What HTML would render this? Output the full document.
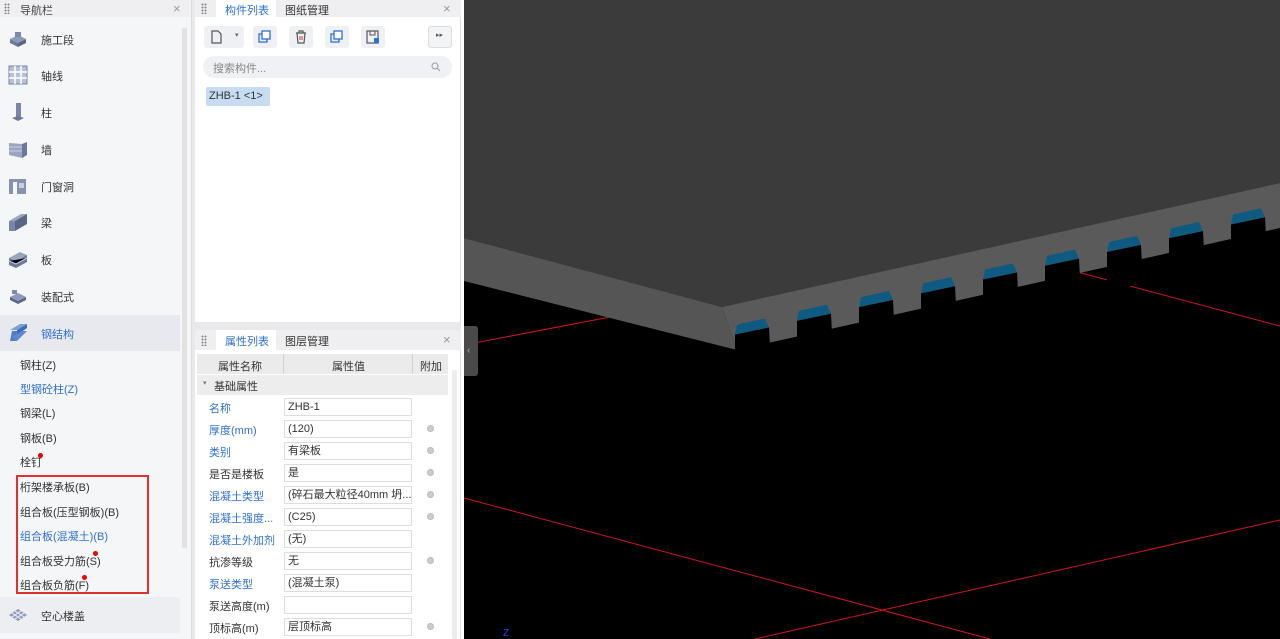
<!DOCTYPE html>
<html><head><meta charset="utf-8"><style>
*{margin:0;padding:0;box-sizing:border-box}
body{width:1280px;height:639px;overflow:hidden;background:#fff;font-family:"Liberation Sans","Noto Sans CJK SC",sans-serif;font-size:11px;color:#333;position:relative}
.abs{position:absolute}
.hdr{background:#efeff1;height:17px}
.grip{position:absolute;width:6px;height:11px;top:3px;background-image:radial-gradient(circle,#888 0.9px,transparent 1.1px);background-size:3px 3px}
.x{position:absolute;top:1px;color:#999;font-size:13px}
.nav-item{position:absolute;left:0;width:180px;height:36px}
.nav-item .ic{position:absolute;left:8px;top:8px;width:20px;height:20px}
.nav-item span{position:absolute;left:41px;top:11px;font-size:11px}
.sub{position:absolute;left:20px;font-size:11px}
.dot{position:absolute;width:5px;height:5px;border-radius:50%;background:#e00}
.tb{position:absolute;top:26px;width:24px;height:22px;background:#eef0f4;border-radius:3px}
.row{position:absolute;left:197px;width:250px;height:22px}
.row .n{position:absolute;left:12px;top:4px}
.row .v{position:absolute;left:87px;top:2px;width:128px;height:18px;border:1px solid #ddd;background:#fff;padding:1px 3px;white-space:nowrap;overflow:hidden;line-height:14px}
.row .c{position:absolute;left:230px;top:7px;width:7px;height:7px;border-radius:50%;background:#ccc;border:1px solid #bbb}
.b{color:#2f6fd6}
</style></head><body>
<div class="abs" style="left:0;top:0;width:191px;height:639px;background:#f5f6f8"></div>
<div class="abs hdr" style="left:0;top:0;width:191px"></div>
<div class="grip" style="left:4px"></div>
<div class="abs" style="left:20px;top:2px;font-size:11px;color:#444">导航栏</div>
<div class="x" style="left:173px">×</div>
<div class="abs" style="left:182px;top:28px;width:5px;height:520px;background:#e2e2e2;border-radius:2px"></div>
<div class="abs" style="left:191px;top:0;width:4px;height:639px;background:#e9e9eb;border-left:1px solid #ddd"></div>

<div class="nav-item" style="top:21px"><svg class="ic" viewBox="0 0 20 20"><path d="M2 10l8-4 8 4-8 4z" fill="#8f9ab8"/><path d="M2 10v4l8 4v-4z" fill="#6b789a"/><path d="M18 10v4l-8 4v-4z" fill="#5a6686"/><rect x="7" y="3" width="6" height="5" fill="#7d89a8"/></svg><span>施工段</span></div>
<div class="nav-item" style="top:57px"><svg class="ic" viewBox="0 0 20 20"><rect x="1" y="1" width="18" height="18" fill="#b8c1d6" stroke="#7884a3"/><path d="M7 1v18M13 1v18M1 7h18M1 13h18" stroke="#fff" stroke-width="1.5"/></svg><span>轴线</span></div>
<div class="nav-item" style="top:94px"><svg class="ic" viewBox="0 0 20 20"><rect x="8" y="1" width="5" height="14" fill="#7a86a6"/><path d="M4 16l6-2 6 2-6 3z" fill="#6b789a"/></svg><span>柱</span></div>
<div class="nav-item" style="top:131px"><svg class="ic" viewBox="0 0 20 20"><path d="M1 4l13 1v14L1 16z" fill="#9aa5c0"/><path d="M14 5l5-2v13l-5 3z" fill="#6b789a"/><path d="M1 8h13M1 12h13" stroke="#c8cfe0"/></svg><span>墙</span></div>
<div class="nav-item" style="top:168px"><svg class="ic" viewBox="0 0 20 20"><path d="M1 3h17v15H1z" fill="#8792b0"/><rect x="5" y="6" width="4" height="12" fill="#f5f6f8"/><rect x="11" y="7" width="5" height="5" fill="#c8cfe0"/></svg><span>门窗洞</span></div>
<div class="nav-item" style="top:204px"><svg class="ic" viewBox="0 0 20 20"><path d="M1 9l12-7h6L7 9z" fill="#9aa5c0"/><path d="M1 9h6v10H1z" fill="#7a86a6"/><path d="M7 9l12-7v10L7 19z" fill="#5a6686"/></svg><span>梁</span></div>
<div class="nav-item" style="top:241px"><svg class="ic" viewBox="0 0 20 20"><path d="M1 9l11-6 7 3-11 6z" fill="#9aa5c0"/><path d="M1 9v7l7 3v-7zM8 12l11-6v7L8 19z" fill="#6b789a"/><path d="M1 12l7 3 11-6" stroke="#c8cfe0"/></svg><span>板</span></div>
<div class="nav-item" style="top:278px"><svg class="ic" viewBox="0 0 20 20"><path d="M2 11l8-4 8 4-8 4z" fill="#8f9ab8"/><path d="M2 11v3l8 4v-3zM18 11v3l-8 4v-3z" fill="#5a6686"/><rect x="4" y="4" width="5" height="4" fill="#7d89a8"/></svg><span>装配式</span></div>
<div class="nav-item" style="top:315px;background:#e7e9ee"><svg class="ic" viewBox="0 0 20 20"><path d="M2 7l10-6h7L9 7z" fill="#7aa0d8"/><path d="M4 8h5v10H2z" fill="#4f7fc8"/><path d="M9 7l10-6v4L9 12z" fill="#3a6cb8"/><path d="M4 14l10-6h5L9 18z" fill="#5b8ad0"/></svg><span class="b">钢结构</span></div>

<div class="sub" style="top:357px">钢柱(Z)</div>
<div class="sub b" style="top:381px">型钢砼柱(Z)</div>
<div class="sub" style="top:405px">钢梁(L)</div>
<div class="sub" style="top:430px">钢板(B)</div>
<div class="sub" style="top:454px">栓钉</div><div class="dot" style="left:38px;top:453px"></div>
<div class="abs" style="left:16px;top:475px;width:133px;height:119px;border:2px solid #e03030"></div>
<div class="sub" style="top:479px">桁架楼承板(B)</div>
<div class="sub" style="top:504px">组合板(压型钢板)(B)</div>
<div class="sub b" style="top:528px">组合板(混凝土)(B)</div>
<div class="sub" style="top:553px">组合板受力筋(S)</div><div class="dot" style="left:93px;top:551px"></div>
<div class="sub" style="top:577px">组合板负筋(F)</div><div class="dot" style="left:82px;top:575px"></div>
<div class="nav-item" style="top:597px;background:#eceef2"><svg class="ic" viewBox="0 0 20 20"><path d="M1 10l9-6 9 6-9 6z" fill="#8f9ab8"/><path d="M4 8l9 6M7 6l9 6M13 6l-9 6M16 8l-9 6" stroke="#dfe3ec" stroke-width="1.2"/></svg><span>空心楼盖</span></div>

<div class="abs" style="left:195px;top:0;width:266px;height:322px;background:#fff;border-right:1px solid #ddd"></div>
<div class="abs hdr" style="left:195px;top:0;width:266px"></div>
<div class="grip" style="left:201px"></div>
<div class="abs" style="left:216px;top:0;width:60px;height:17px;background:#fff"></div>
<div class="abs b" style="left:225px;top:2px">构件列表</div>
<div class="abs" style="left:285px;top:2px">图纸管理</div>
<div class="x" style="left:443px">×</div>
<div class="tb" style="left:204px;width:40px"><svg class="abs" style="left:5px;top:4px" width="14" height="14" viewBox="0 0 14 14"><path d="M3 1h6l3 3v9H3z" fill="none" stroke="#555" stroke-width="1.2"/></svg><span class="abs" style="left:31px;top:5px;font-size:7px;color:#666">▾</span></div>
<div class="tb" style="left:253px"><svg class="abs" style="left:5px;top:4px" width="14" height="14" viewBox="0 0 14 14"><rect x="1" y="4" width="8" height="8" fill="none" stroke="#2f6fd6" stroke-width="1.3"/><rect x="4" y="1" width="8" height="8" fill="#fff" stroke="#2f6fd6" stroke-width="1.3"/></svg></div>
<div class="tb" style="left:289px"><svg class="abs" style="left:5px;top:4px" width="14" height="14" viewBox="0 0 14 14"><path d="M2 3h10M5 3V1h4v2M3 3l1 10h6l1-10" fill="none" stroke="#555" stroke-width="1.2"/><path d="M6 6v4M8 6v4" stroke="#d33"/></svg></div>
<div class="tb" style="left:325px"><svg class="abs" style="left:5px;top:4px" width="14" height="14" viewBox="0 0 14 14"><rect x="1" y="4" width="8" height="8" fill="none" stroke="#2f6fd6" stroke-width="1.3"/><rect x="4" y="1" width="8" height="8" fill="#fff" stroke="#2f6fd6" stroke-width="1.3"/></svg></div>
<div class="tb" style="left:361px"><svg class="abs" style="left:5px;top:4px" width="14" height="14" viewBox="0 0 14 14"><rect x="1" y="1" width="11" height="12" fill="none" stroke="#555" stroke-width="1.2"/><path d="M4 1v4h5V1" fill="none" stroke="#555"/><rect x="8" y="8" width="5" height="5" fill="#2f6fd6"/></svg></div>
<div class="tb" style="left:428px;background:#f3f4f6;border:1px solid #ddd"><span class="abs" style="left:7px;top:4px;font-size:7px;color:#555">▸▸</span></div>
<div class="abs" style="left:203px;top:56px;width:249px;height:22px;background:#eff1f4;border-radius:11px"></div>
<div class="abs" style="left:213px;top:60px;color:#888">搜索构件...</div>
<svg class="abs" style="left:431px;top:62px" width="10" height="10" viewBox="0 0 10 10"><circle cx="4" cy="4" r="3" fill="none" stroke="#999"/><path d="M6.5 6.5L9 9" stroke="#999"/></svg>
<div class="abs" style="left:206px;top:87px;width:64px;height:19px;background:#c7dbf3;border-radius:2px;padding:3px 3px;color:#333">ZHB-1 &lt;1&gt;</div>

<div class="abs" style="left:195px;top:322px;width:266px;height:8px;background:#e9e9eb"></div>
<div class="abs" style="left:195px;top:330px;width:266px;height:309px;background:#fff;border-right:1px solid #ddd"></div>
<div class="abs hdr" style="left:195px;top:330px;width:266px;height:20px"></div>
<div class="grip" style="left:201px;top:335px"></div>
<div class="abs" style="left:216px;top:330px;width:60px;height:20px;background:#fff"></div>
<div class="abs b" style="left:225px;top:333px">属性列表</div>
<div class="abs" style="left:285px;top:333px">图层管理</div>
<div class="x" style="left:443px;top:332px">×</div>
<div class="abs" style="left:197px;top:354px;width:251px;height:20px;background:#ebebeb"></div>
<div class="abs" style="left:283px;top:354px;width:1px;height:20px;background:#d0d0d0"></div>
<div class="abs" style="left:412px;top:354px;width:1px;height:20px;background:#d0d0d0"></div>
<div class="abs" style="left:218px;top:358px">属性名称</div>
<div class="abs" style="left:332px;top:358px">属性值</div>
<div class="abs" style="left:420px;top:358px">附加</div>
<div class="abs" style="left:197px;top:375px;width:251px;height:20px;background:#ededed"></div>
<div class="abs" style="left:203px;top:379px;font-size:7px;color:#777">▾</div>
<div class="abs" style="left:214px;top:378px">基础属性</div>
<div class="abs" style="left:452px;top:370px;width:5px;height:269px;background:#ececec;border-radius:2px"></div>

<div class="row" style="top:396px"><span class="n b">名称</span><span class="v">ZHB-1</span></div>
<div class="row" style="top:418px"><span class="n b">厚度(mm)</span><span class="v">(120)</span><span class="c"></span></div>
<div class="row" style="top:440px"><span class="n b">类别</span><span class="v">有梁板</span><span class="c"></span></div>
<div class="row" style="top:462px"><span class="n">是否是楼板</span><span class="v">是</span><span class="c"></span></div>
<div class="row" style="top:484px"><span class="n b">混凝土类型</span><span class="v">(碎石最大粒径40mm 坍...</span><span class="c"></span></div>
<div class="row" style="top:506px"><span class="n b">混凝土强度...</span><span class="v">(C25)</span><span class="c"></span></div>
<div class="row" style="top:528px"><span class="n b">混凝土外加剂</span><span class="v">(无)</span></div>
<div class="row" style="top:550px"><span class="n">抗渗等级</span><span class="v">无</span><span class="c"></span></div>
<div class="row" style="top:572px"><span class="n b">泵送类型</span><span class="v">(混凝土泵)</span></div>
<div class="row" style="top:594px"><span class="n">泵送高度(m)</span><span class="v"></span></div>
<div class="row" style="top:616px"><span class="n">顶标高(m)</span><span class="v">层顶标高</span><span class="c"></span></div>

<svg class="abs" style="left:464px;top:0" width="816" height="639" viewBox="464 0 816 639">
<rect x="464" y="0" width="816" height="639" fill="#000"/>
<path d="M464 345L610 317" stroke="#d01818" stroke-width="1"/>
<path d="M1040 262L1280 326" stroke="#d01818"/>
<path d="M464 498L990 639" stroke="#d01818"/>
<path d="M755 639L1280 520" stroke="#d01818"/>
<polygon points="464,0 1280,0 1280,183 722,307 464,238" fill="#3b3b3b"/>
<polygon points="464,238 722,307 737,350 464,281" fill="#555"/>
<polygon points="722,307 1280,183 1280,228 737,350" fill="#5a5a5a"/>
<g id="notches"></g>
<text x="503" y="636" fill="#2244ff" font-size="10" font-family="Liberation Sans">Z</text>
</svg>
<script>
var g=document.getElementById('notches'),s='';
for(var x=737;x<1290;x+=62){
 var yt=307-(x-722)*0.2222;
 var nt=yt+19, nb=yt+70;
 var sl=-0.2222;
 s+='<polygon points="'+x+','+(nt+2)+' '+(x+28)+','+(nt+2+28*sl)+' '+(x+32)+','+(nt+12+32*sl)+' '+(x-2)+','+(nt+12)+'" fill="#0f5a80"/>';
 s+='<polygon points="'+(x-2)+','+(nt+12)+' '+(x+32)+','+(nt+12+32*sl)+' '+(x+34)+','+(nb+34*sl)+' '+(x-2)+','+nb+'" fill="#000"/>';
}
g.innerHTML=s;
</script>
<div class="abs" style="left:464px;top:326px;width:14px;height:50px;background:#4a4a4a;border-radius:0 3px 3px 0;color:#aaa;font-size:10px;padding:19px 0 0 3px">‹</div>
</body></html>
